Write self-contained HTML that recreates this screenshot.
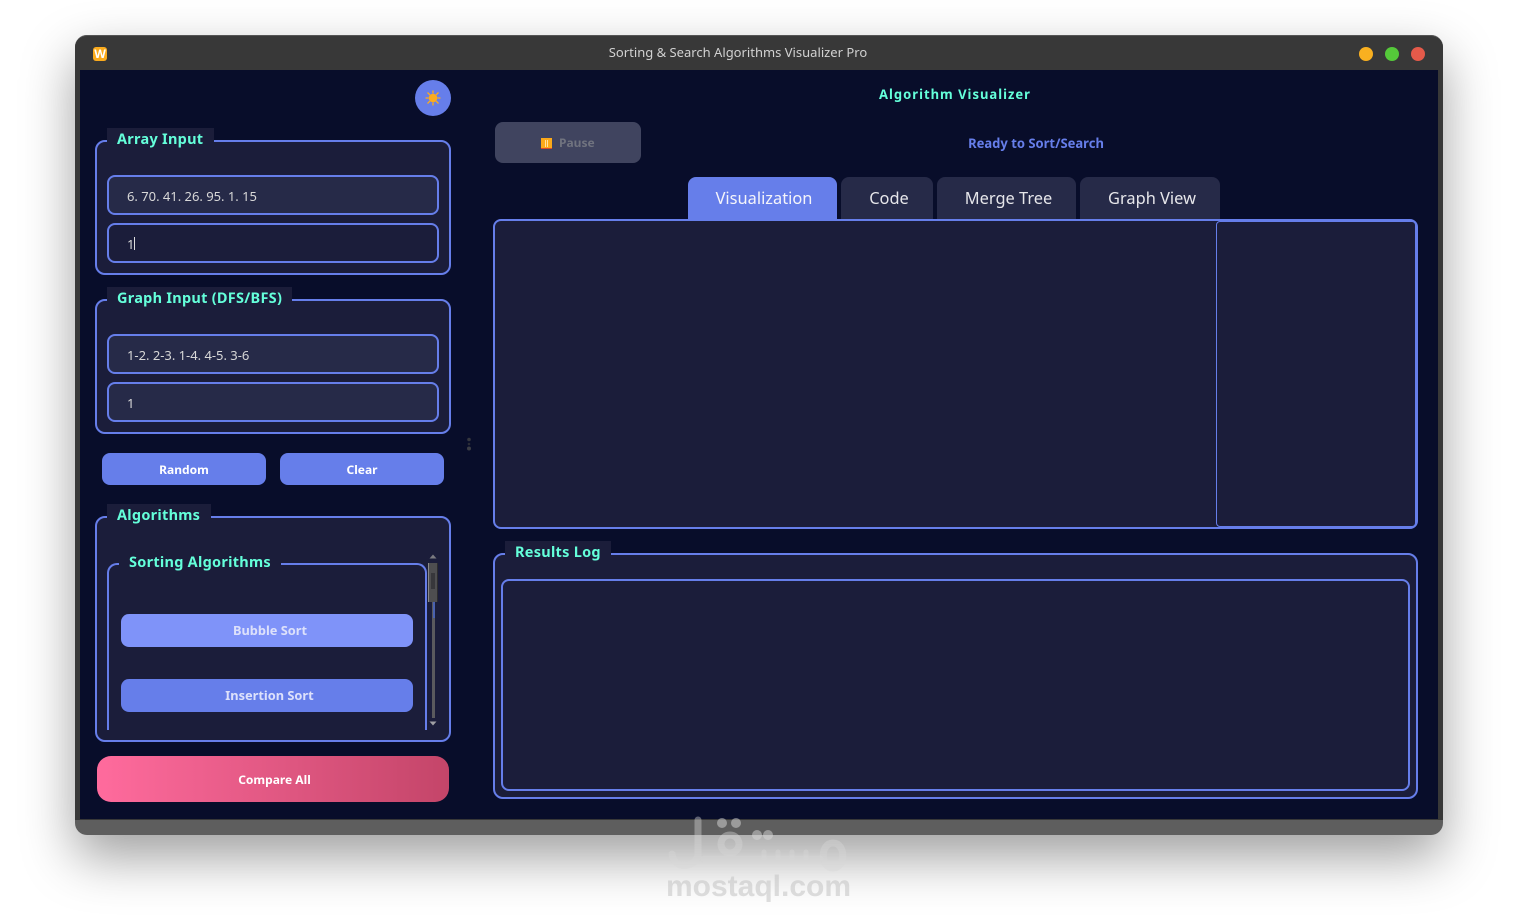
<!DOCTYPE html>
<html><head><meta charset="utf-8">
<style>
html,body{margin:0;padding:0;width:1518px;height:920px;overflow:hidden;background:#fff}
*{box-sizing:border-box}
body{font-family:"Noto Sans","Liberation Sans","DejaVu Sans",sans-serif;position:relative}
.a{position:absolute}
.t{position:absolute;white-space:nowrap;line-height:20px;height:20px}
.c{transform:translateX(-50%)}
.g{position:absolute;border:2px solid #667eea;border-radius:10px;background:#1b1d3a}
.lb{position:absolute;background:#1b1d3a;height:20px}
.h{color:#64ffda;font-weight:700;font-size:14.5px;letter-spacing:.27px}
.i{position:absolute;left:107px;width:332px;height:40px;border:2px solid #667eea;border-radius:8px;background:#262a48}
.v{color:#d8d8d8;font-size:13px;letter-spacing:-.02px}
.b{position:absolute;background:#667eea;border-radius:8px}
.bt{color:#fff;font-weight:700;font-size:12px}
.bs{color:#dde1fb;font-weight:700;font-size:12.8px}
.tab{position:absolute;top:177px;height:43px;background:#262a48;border-radius:8px 8px 0 0}
.tt{color:#e6e6ea;font-size:16.4px}
</style></head><body>

<div class="a" style="left:75px;top:35px;width:1368px;height:800px;border-radius:12px;background:#5e5e5e;box-shadow:0 22px 52px rgba(0,0,0,.38)"></div>
<div class="a" style="left:75px;top:35px;width:1368px;height:785px;border-radius:12px 12px 0 0;background:#383838;border-top:1px solid #555"></div>
<div class="a" style="left:80px;top:70px;width:1358px;height:749px;background:#080d2a"></div>

<div class="a" style="left:93px;top:47px;width:14px;height:14px;border-radius:3px;background:#fbab1d"></div>
<div class="t c" style="left:100px;top:44px;color:#fff;font-size:12px;font-weight:700">W</div>
<div class="t c" style="left:738px;top:42px;color:#d2d2d2;font-size:13px">Sorting &amp; Search Algorithms Visualizer Pro</div>
<div class="a" style="left:1359px;top:47px;width:14px;height:14px;border-radius:50%;background:#f9b020"></div>
<div class="a" style="left:1385px;top:47px;width:14px;height:14px;border-radius:50%;background:#55c93a"></div>
<div class="a" style="left:1411px;top:47px;width:14px;height:14px;border-radius:50%;background:#e45a4a"></div>

<div class="a" style="left:415px;top:80px;width:36px;height:36px;border-radius:50%;background:#667eea"></div>
<svg class="a" style="left:423px;top:88px" width="20" height="20" viewBox="0 0 20 20"><circle cx="10" cy="10" r="4.300" fill="#fbab1d"/><path d="M10 2.500v3M10 14.500v3M2.500 10h3M14.500 10h3M4.500 4.500l2.500 2.500M13 13l2.500 2.500M4.500 15.500l2.500-2.500M13 7l2.500-2.500" stroke="#fbab1d" stroke-width="1.300"/></svg>

<div class="g" style="left:95px;top:140px;width:356px;height:135px"></div>
<div class="lb" style="left:107px;top:128px;width:107px"></div>
<div class="t h" style="left:117px;top:129px">Array Input</div>
<div class="i" style="top:175px"></div>
<div class="t v" style="left:127px;top:186px">6. 70. 41. 26. 95. 1. 15</div>
<div class="i" style="top:223px;background:#1b1d3a"></div>
<div class="t v" style="left:127px;top:234px">1</div>
<div class="a" style="left:134px;top:237px;width:1px;height:13px;background:#ddd"></div>

<div class="g" style="left:95px;top:299px;width:356px;height:135px"></div>
<div class="lb" style="left:107px;top:287px;width:185px"></div>
<div class="t h" style="left:117px;top:288px">Graph Input (DFS/BFS)</div>
<div class="i" style="top:334px"></div>
<div class="t v" style="left:127px;top:345px">1-2. 2-3. 1-4. 4-5. 3-6</div>
<div class="i" style="top:382px"></div>
<div class="t v" style="left:127px;top:393px">1</div>

<div class="b" style="left:102px;top:453px;width:164px;height:32px"></div>
<div class="t c bt" style="left:184px;top:460px">Random</div>
<div class="b" style="left:280px;top:453px;width:164px;height:32px"></div>
<div class="t c bt" style="left:362px;top:460px">Clear</div>

<svg class="a" style="left:466px;top:437px" width="6" height="14" viewBox="0 0 6 14"><circle cx="3" cy="2.500" r="1.800" fill="#35373f"/><circle cx="3" cy="7" r="1.300" fill="#2a2c36"/><circle cx="3" cy="11.500" r="2" fill="#3b3d45"/></svg>

<div class="g" style="left:95px;top:516px;width:356px;height:226px"></div>
<div class="lb" style="left:107px;top:504px;width:104px"></div>
<div class="t h" style="left:117px;top:505px">Algorithms</div>
<div class="a" style="left:107px;top:563px;width:320px;height:167px;border:2px solid #667eea;border-bottom:none;border-radius:10px 10px 0 0"></div>
<div class="lb" style="left:119px;top:552px;width:162px"></div>
<div class="t h" style="left:129px;top:552px">Sorting Algorithms</div>
<div class="b" style="left:121px;top:614px;width:292px;height:33px;background:#7f93f9"></div>
<div class="t c bs" style="left:270px;top:620px">Bubble Sort</div>
<div class="b" style="left:121px;top:679px;width:292px;height:33px"></div>
<div class="t c bs" style="left:269.500px;top:685px">Insertion Sort</div>

<div class="a" style="left:432px;top:600px;width:3px;height:118px;background:#5a5a5e"></div>
<div class="a" style="left:433px;top:602px;width:2px;height:16px;background:#4a62b0"></div>
<div class="a" style="left:428px;top:563px;width:10px;height:39px;background:#4e4e50;border-left:1px solid #8a8a8a;border-right:1px solid #2c2c2e"></div>
<div class="a" style="left:431px;top:573px;width:4px;height:16px;background:#2e2e32;opacity:.7"></div>
<svg class="a" style="left:428px;top:552px" width="10" height="8"><path d="M1.500 6.500L5 2.500L8.500 6.500z" fill="#7a7a80"/></svg>
<svg class="a" style="left:428px;top:720px" width="10" height="8"><path d="M1.500 1.500L5 5.500L8.500 1.500z" fill="#a0a0a4"/></svg>

<div class="a" style="left:97px;top:756px;width:352px;height:46px;border-radius:14px;background:linear-gradient(90deg,#ff6b9d,#c44569)"></div>
<div class="t c bt" style="left:274.500px;top:770px">Compare All</div>

<div class="t c" style="left:955px;top:84px;color:#64ffda;font-weight:700;font-size:13px;letter-spacing:1px">Algorithm Visualizer</div>
<div class="a" style="left:495px;top:122px;width:146px;height:41px;border-radius:8px;background:#40445f"></div>
<div class="a" style="left:541px;top:138px;width:11px;height:11px;background:#fba919;border-bottom:1px solid #d84a2a"></div>
<div class="a" style="left:545px;top:140px;width:1px;height:7px;background:#ffe0a0"></div>
<div class="a" style="left:547px;top:140px;width:1px;height:7px;background:#ffe0a0"></div>
<div class="t" style="left:559px;top:133px;color:#70737f;font-weight:700;font-size:12px">Pause</div>
<div class="t c" style="left:1036px;top:133px;color:#667eea;font-weight:700;font-size:13px">Ready to Sort/Search</div>

<div class="tab" style="left:688px;width:149px;background:#667eea"></div>
<div class="t c tt" style="left:764px;top:188px;color:#f4f4fa">Visualization</div>
<div class="tab" style="left:841px;width:92px"></div>
<div class="t c tt" style="left:889px;top:188px">Code</div>
<div class="tab" style="left:937px;width:139px"></div>
<div class="t c tt" style="left:1008.500px;top:188px">Merge Tree</div>
<div class="tab" style="left:1080px;width:140px"></div>
<div class="t c tt" style="left:1152px;top:188px">Graph View</div>

<div class="g" style="left:493px;top:219px;width:925px;height:310px;border-radius:8px"></div>
<div class="a" style="left:1216px;top:221px;width:200px;height:306px;border:1px solid #667eea;border-radius:4px"></div>

<div class="g" style="left:493px;top:553px;width:925px;height:246px"></div>
<div class="lb" style="left:505px;top:541px;width:106px"></div>
<div class="t h" style="left:515px;top:542px">Results Log</div>
<div class="a" style="left:501px;top:579px;width:909px;height:212px;border:2px solid #667eea;border-radius:8px"></div>

<svg class="a" style="left:660px;top:812px" width="200" height="62" viewBox="0 0 200 62">
<g fill="none" stroke="rgba(215,215,215,.42)" stroke-width="7" stroke-linecap="round">
<path d="M38 8V44C34 56 14 58 12 42"/>
<path d="M44 47H160"/>
<circle cx="70" cy="32" r="9"/>
<path d="M104 47V40M118 47V40M132 47V40M146 47V40" stroke-width="5"/>
<path d="M173 56C160 56 160 31 173 31C186 31 186 56 173 56"/>
</g>
<g fill="rgba(215,215,215,.5)"><circle cx="62" cy="11" r="5"/><circle cx="76" cy="11" r="5"/><circle cx="97" cy="23" r="5"/><circle cx="108" cy="23" r="5"/></g>
</svg>
<div class="t c" style="left:758.500px;top:872px;height:30px;line-height:30px;font-family:'Liberation Sans',sans-serif;font-weight:700;font-size:30px;color:rgba(195,195,195,.55)">mostaql.com</div>

</body></html>
